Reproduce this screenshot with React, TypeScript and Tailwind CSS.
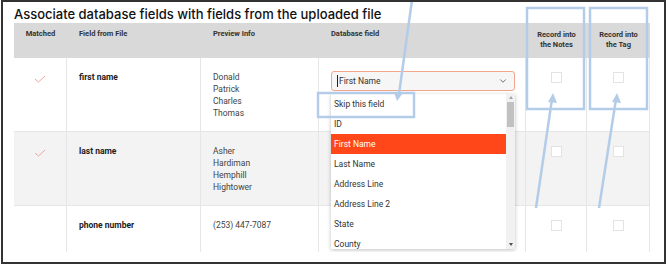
import { ChevronDown } from "lucide-react";

const rows = [
  { matched: true, field: "first name", preview: ["Donald", "Patrick", "Charles", "Thomas"], h: "h-[74px]", bg: "bg-white" },
  { matched: true, field: "last name", preview: ["Asher", "Hardiman", "Hemphill", "Hightower"], h: "h-[74px]", bg: "bg-[#f3f3f3]" },
  { matched: false, field: "phone number", preview: ["(253) 447-7087"], h: "h-[47px]", bg: "bg-white" },
];

const options = ["Skip this field", "ID", "First Name", "Last Name", "Address Line", "Address Line 2", "State", "County"];

const cols = "grid grid-cols-[53px_134px_118px_207px_61px_63px]";

function Check() {
  return (
    <svg width="12" height="8" viewBox="0 0 12 8" className="mx-auto mt-[2px]">
      <path d="M1 4 L4.5 7 L11 1" fill="none" stroke="#f5a3a3" strokeWidth="1" />
    </svg>
  );
}

function Box() {
  return <div className="mx-auto h-[11px] w-[11px] border border-[#e3e3e3] bg-white" />;
}

function Dropdown() {
  return (
    <div className="absolute left-[12px] top-[13px] z-10 w-[184px]">
      <div className="flex h-[20px] items-center justify-between rounded-[3px] border border-[#f4a58e] bg-[#f6f6f6] pl-[5px] pr-[6px]">
        <div className="flex items-center">
          <span className="mr-[1px] h-[12px] w-px bg-[#222]" />
          <span className="text-[8.5px] text-[#333]">First Name</span>
        </div>
        <ChevronDown size={10} strokeWidth={2} className="text-[#555]" />
      </div>
      <div className="mt-[3px] flex h-[155px] w-[184px] overflow-hidden bg-white shadow-[0_1px_4px_rgba(0,0,0,0.25)]">
        <div className="flex-1">
          {options.map((o) => (
            <div
              key={o}
              className={`flex h-[20px] items-center pl-[3px] text-[8.5px] ${o === "First Name" ? "bg-[#ff4719] text-white" : "text-[#333]"}`}
            >
              {o}
            </div>
          ))}
        </div>
        <div className="flex w-[9px] flex-col items-center bg-[#f1f1f1]">
          <div className="mt-[2px] h-0 w-0 border-x-[2px] border-b-[3px] border-x-transparent border-b-[#a3a3a3]" />
          <div className="mt-[3px] h-[25px] w-[7px] bg-[#c1c1c1]" />
          <div className="flex-1" />
          <div className="mb-[3px] h-0 w-0 border-x-[2px] border-t-[3px] border-x-transparent border-t-[#505050]" />
        </div>
      </div>
    </div>
  );
}

export default function App() {
  return (
    <div className="h-[266px] w-[668px] bg-white pl-[1px]">
      <div className="relative h-[264px] w-[665px] overflow-hidden border-2 border-[#333] font-['Roboto',sans-serif]">
        <h1 className="pl-[11px] pt-[3px] font-['Inter',sans-serif] text-[13px] font-medium leading-[18px] text-[#111]">
          Associate database fields with fields from the uploaded file
        </h1>

        <div className="ml-[11px] h-[229px] w-[636px] overflow-hidden">
          {/* header */}
          <div className={`${cols} h-[35px] bg-[#d9d9d9] text-[7.5px] font-bold leading-[10px] text-[#333]`}>
            <div className="pt-[6px] text-center">Matched</div>
            <div className="pl-[12px] pt-[6px]">Field from File</div>
            <div className="pl-[12px] pt-[6px]">Preview Info</div>
            <div className="pl-[12px] pt-[6px]">Database field</div>
            <div className="pt-[7px] text-center">Record into<br />the Notes</div>
            <div className="pt-[7px] text-center">Record into<br />the Tag</div>
          </div>

          {rows.map((r, i) => (
            <div key={r.field} className={`${cols} ${r.h} ${r.bg} border-b border-[#e6e6e6]`}>
              <div className="border-r border-[#e6e6e6] pt-[15px]">{r.matched && <Check />}</div>
              <div className="border-r border-[#e6e6e6] pl-[12px] pt-[13px] text-[8.5px] font-bold leading-[12px] text-[#222]">
                {r.field}
              </div>
              <div className="border-r border-[#e6e6e6] pl-[12px] pt-[13px] text-[8.5px] leading-[12px] text-[#444]">
                {r.preview.map((p) => (
                  <div key={p}>{p}</div>
                ))}
              </div>
              <div className="relative border-r border-[#e6e6e6]">{i === 0 && <Dropdown />}</div>
              <div className="border-r border-[#e6e6e6] pt-[14px]"><Box /></div>
              <div className="border-r border-[#e6e6e6] pt-[14px]"><Box /></div>
            </div>
          ))}
        </div>

        {/* annotation overlay */}
        <svg className="pointer-events-none absolute left-[-3px] top-[-2px] z-20" width="668" height="266">
          <g fill="none" stroke="#b3cde9" strokeWidth="2.5">
            <rect x="318" y="93" width="96" height="24" />
            <rect x="527" y="8" width="57" height="101" />
            <rect x="590" y="8" width="57" height="101" />
            <line x1="412" y1="0" x2="399" y2="94" />
            <line x1="536" y1="208" x2="552" y2="99" />
            <line x1="599" y1="208" x2="616" y2="99" />
          </g>
          <g fill="#b3cde9">
            <polygon points="397,101 394,92 403,93" />
            <polygon points="553,93 548,102 557,103" />
            <polygon points="617,93 612,102 621,103" />
          </g>
        </svg>
      </div>
    </div>
  );
}
